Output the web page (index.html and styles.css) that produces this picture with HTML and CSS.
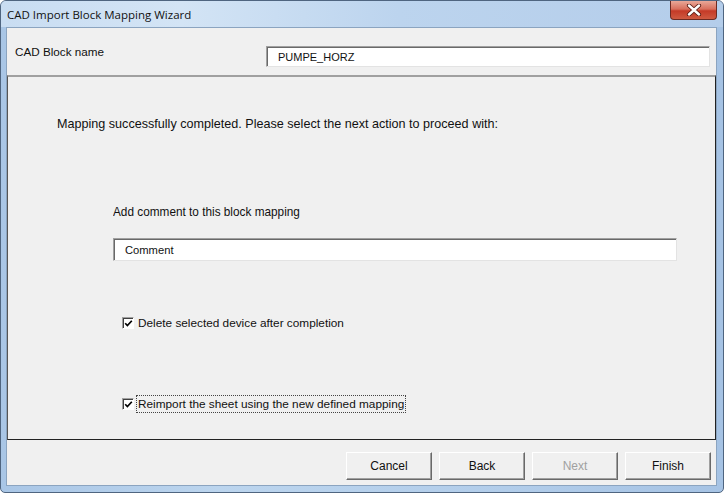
FILE: index.html
```html
<!doctype html>
<html lang="en">

<head>
	<meta charset="UTF-8">
	<title>CAD Import Block Mapping Wizard</title>
	<link rel="stylesheet" href="styles.css">
</head>

<body>
	<div class="window">
		<div class="titlebar">
			<span class="title">CAD Import Block Mapping Wizard</span>
			<span class="close">
				<svg width="16" height="12" viewBox="0 0 16 12">
					<path d="M3 1.5 L13 10.5 M13 1.5 L3 10.5" stroke="#5a1c14" stroke-width="4.2" stroke-linecap="round"/>
					<path d="M3 1.5 L13 10.5 M13 1.5 L3 10.5" stroke="#fff" stroke-width="2.4" stroke-linecap="round"/>
				</svg>
			</span>
		</div>
		<div class="client">
			<div class="name-row">
				<span class="name-label">CAD Block name</span>
				<div class="field name-field">PUMPE_HORZ</div>
			</div>
			<div class="panel">
				<p class="intro">Mapping successfully completed. Please select the next action to proceed with:</p>
				<p class="comment-label">Add comment to this block mapping</p>
				<div class="field comment-field">Comment</div>
				<label class="option option-delete">
					<span class="box"><svg width="9" height="9" viewBox="0 0 9 9"><path d="M1.2 4.2 L3.4 6.6 L7.8 1.8" fill="none" stroke="#000" stroke-width="1.7"/></svg></span>
					<span class="option-text">Delete selected device after completion</span>
				</label>
				<label class="option option-reimport">
					<span class="box"><svg width="9" height="9" viewBox="0 0 9 9"><path d="M1.2 4.2 L3.4 6.6 L7.8 1.8" fill="none" stroke="#000" stroke-width="1.7"/></svg></span>
					<span class="option-text focused">Reimport the sheet using the new defined mapping</span>
				</label>
			</div>
			<div class="buttons">
				<button class="btn">Cancel</button>
				<button class="btn">Back</button>
				<button class="btn" disabled>Next</button>
				<button class="btn">Finish</button>
			</div>
		</div>
	</div>
</body>

</html>
```

FILE: styles.css
```css
html,
body {
	margin: 0;
	padding: 0;
	width: 100%;
	height: 100%;
	background: #fff;
	font-family: "Liberation Sans", Arial, sans-serif;
	font-size: 11.7px;
	color: #111;
}

p {
	margin: 0;
}

.window {
	box-sizing: border-box;
	width: 724px;
	height: 493px;
	display: flex;
	flex-direction: column;
	border: 1px solid #4f6580;
	border-radius: 6px 6px 5px 5px;
	background: linear-gradient(90deg, #a9c6e6, #bcd5ee 30%, #b2cdea 70%, #a6c3e4);
	padding: 0 6px 6px 5px;
	overflow: hidden;
}

.titlebar {
	height: 26px;
	display: flex;
	align-items: flex-start;
	margin: 0 -6px 0 -5px;
	padding-left: 6px;
	background: linear-gradient(90deg, #c9ddf2, #d3e4f5 25%, #bcd4ee 55%, #b4cdea);
}

.title {
	flex: 1;
	font-family: "Open Sans", "Noto Sans", sans-serif;
	font-size: 11.5px;
	line-height: 16px;
	padding-top: 6px;
	color: #111;
}

.close {
	width: 45px;
	height: 18px;
	margin-right: 6px;
	display: flex;
	align-items: center;
	justify-content: center;
	border: 1px solid #6b2a22;
	border-top: none;
	border-radius: 0 0 4px 4px;
	background: linear-gradient(180deg, #e9a898, #d86f5c 45%, #c43a27 55%, #cf5a41);
}

.client {
	flex: 1;
	display: flex;
	flex-direction: column;
	background: #f0f0f0;
	border: 1px solid #8ba4c0;
}

.name-row {
	height: 47px;
	box-sizing: border-box;
	display: flex;
	align-items: flex-start;
	padding: 16px 6px 0 8px;
}

.name-label {
	flex: 1;
	line-height: 16px;
}

.field {
	box-sizing: border-box;
	background: #fff;
	border-top: 1px solid #a0a0a0;
	border-left: 1px solid #a0a0a0;
	border-right: 1px solid #e3e3e3;
	border-bottom: 1px solid #e3e3e3;
	box-shadow: inset 1px 1px #696969;
	padding-left: 11px;
	display: flex;
	align-items: center;
	font-size: 11.2px;
}

.name-field {
	width: 444px;
	height: 21px;
	margin-top: 2px;
	font-size: 11px;
}

.panel {
	height: 365px;
	box-sizing: border-box;
	display: flex;
	flex-direction: column;
	align-items: flex-start;
	border-top: 2px solid #a0a0a0;
	border-left: 1px solid #555;
	border-right: 1px solid #222;
	border-bottom: 1px solid #222;
}

.intro {
	font-size: 12.6px;
	line-height: 16px;
	margin: 39px 0 0 49px;
}

.comment-label {
	font-size: 11.8px;
	line-height: 16px;
	margin: 72px 0 0 105px;
	transform: scaleY(1.12);
}

.comment-field {
	width: 564px;
	height: 23px;
	margin: 18px 0 0 105px;
}

.option {
	display: flex;
	align-items: center;
	height: 18px;
	margin-left: 114px;
	font-size: 11.8px;
}

.option-delete {
	margin-top: 53px;
}

.option-reimport {
	margin-top: 63px;
}

.box {
	box-sizing: border-box;
	width: 12px;
	height: 12px;
	display: flex;
	align-items: center;
	justify-content: center;
	background: #fff;
	border-top: 1px solid #a0a0a0;
	border-left: 1px solid #a0a0a0;
	border-right: 1px solid #fff;
	border-bottom: 1px solid #fff;
	box-shadow: inset 1px 1px #404040;
	margin-right: 4px;
}

.option-text {
	line-height: 16px;
	border: 1px solid transparent;
	padding: 0 1px;
	margin-left: -2px;
}

.focused {
	border: 1px dotted #444;
}

.buttons {
	display: flex;
	justify-content: flex-end;
	gap: 7px;
	padding: 12px 5px 0 0;
}

.btn {
	box-sizing: border-box;
	width: 86px;
	height: 28px;
	font-family: "Liberation Sans", Arial, sans-serif;
	font-size: 12px;
	color: #111;
	background: #f0f0f0;
	border: 1px solid;
	border-color: #fff #696969 #696969 #fff;
	box-shadow: inset -1px -1px #a0a0a0;
	padding: 0;
}

.btn:disabled {
	color: #a0a0a0;
}
```
